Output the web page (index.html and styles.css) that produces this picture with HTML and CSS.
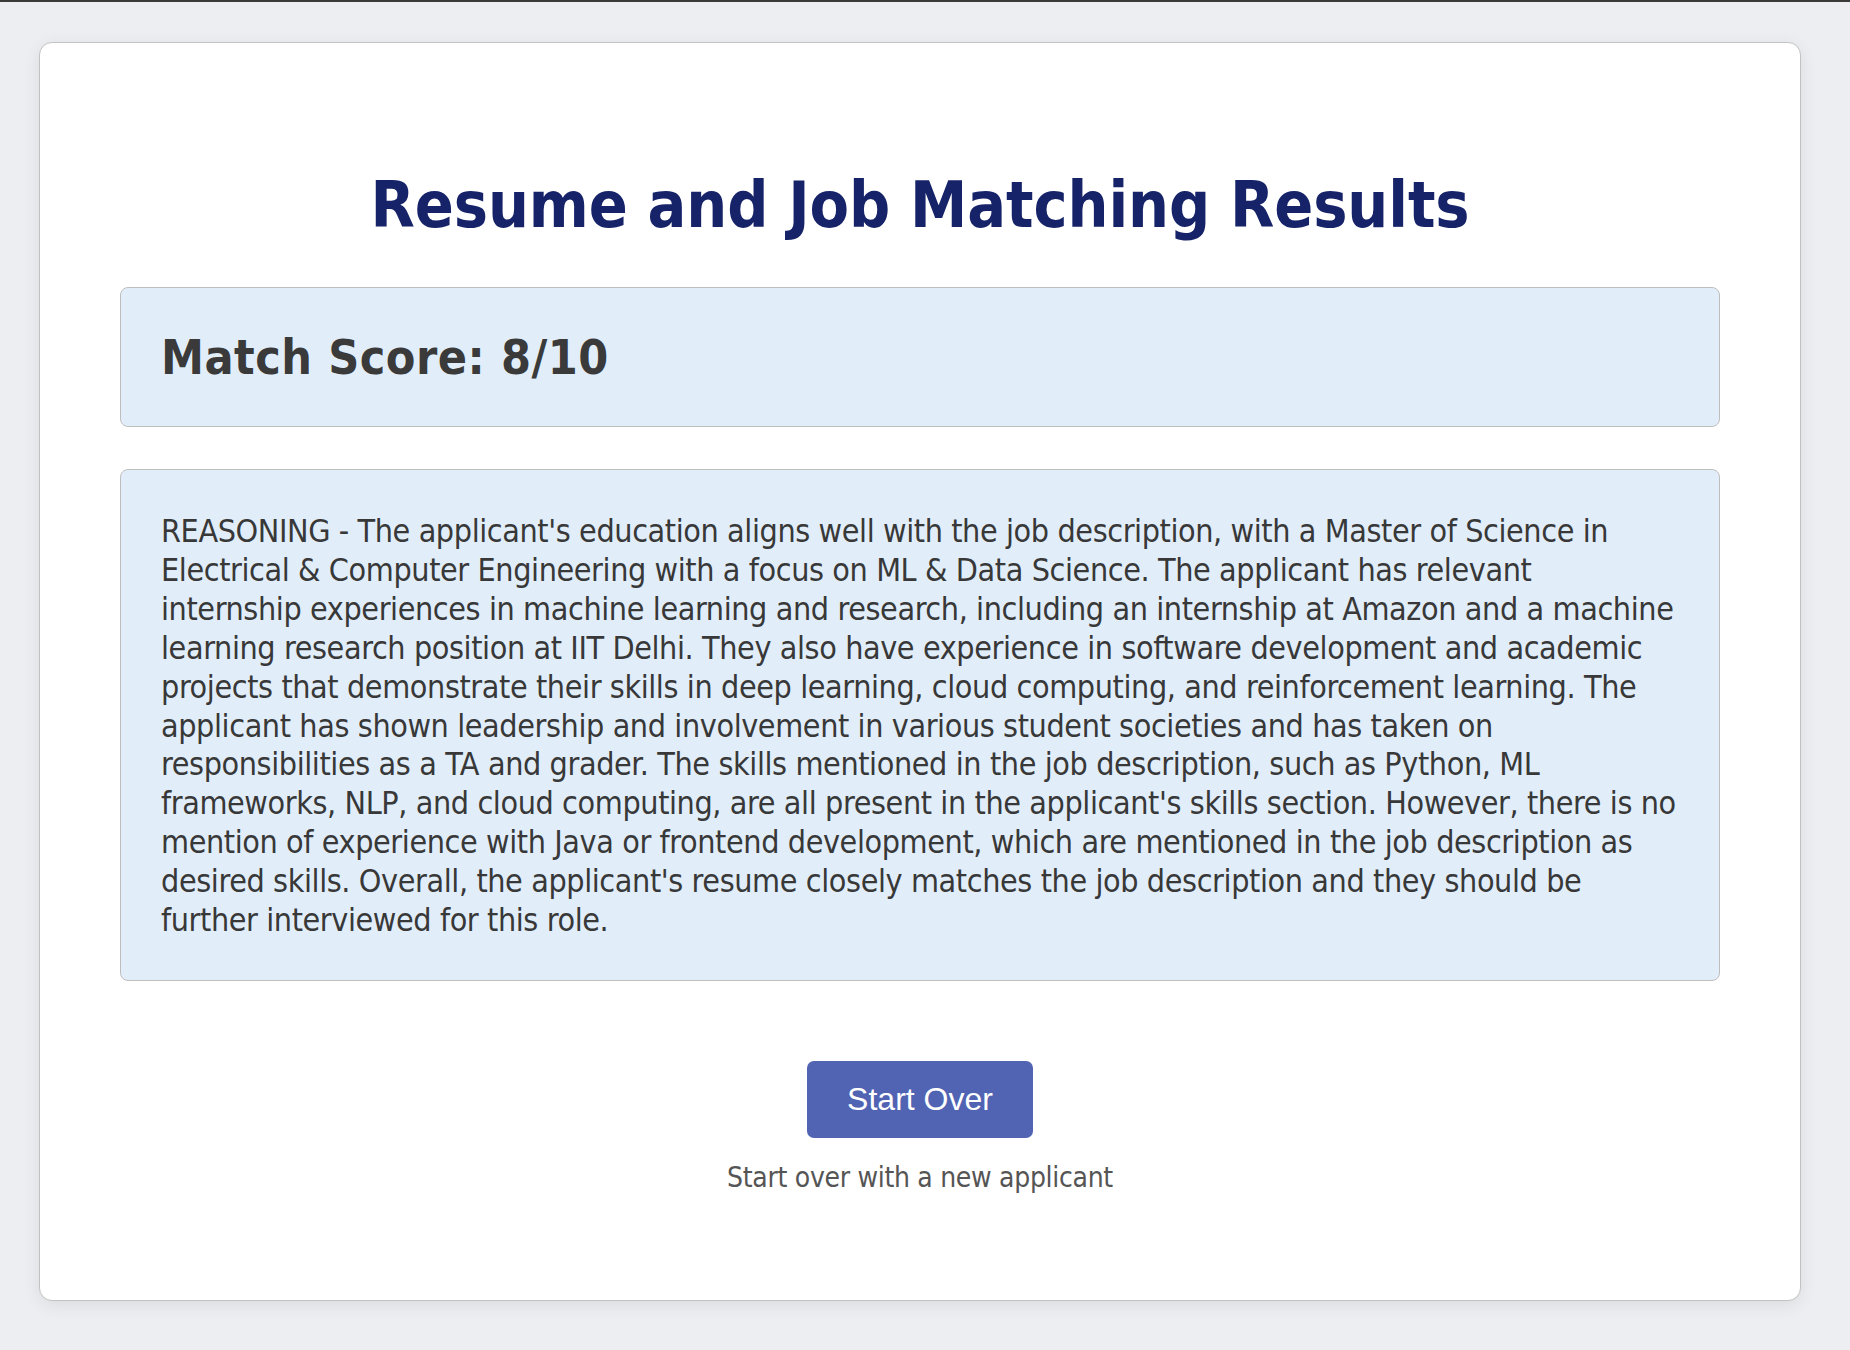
FILE: index.html
```html
<!DOCTYPE html>
<html lang="en">
<head>
<meta charset="utf-8">
<title>Resume and Job Matching Results</title>
<link rel="stylesheet" href="styles.css">
</head>
<body>
<div class="topbar"></div>
<main class="card">
  <h1 class="title">Resume and Job Matching Results</h1>
  <section class="panel score">
    <h2 class="score-text">Match Score: 8/10</h2>
  </section>
  <section class="panel reasoning">
    <p class="reasoning-text">REASONING - The applicant's education aligns well with the job description, with a Master of Science in<br>
Electrical &amp; Computer Engineering with a focus on ML &amp; Data Science. The applicant has relevant<br>
internship experiences in machine learning and research, including an internship at Amazon and a machine<br>
learning research position at IIT Delhi. They also have experience in software development and academic<br>
projects that demonstrate their skills in deep learning, cloud computing, and reinforcement learning. The<br>
applicant has shown leadership and involvement in various student societies and has taken on<br>
responsibilities as a TA and grader. The skills mentioned in the job description, such as Python, ML<br>
frameworks, NLP, and cloud computing, are all present in the applicant's skills section. However, there is no<br>
mention of experience with Java or frontend development, which are mentioned in the job description as<br>
desired skills. Overall, the applicant's resume closely matches the job description and they should be<br>
further interviewed for this role.</p>
  </section>
  <div class="actions">
    <button class="btn" type="button">Start Over</button>
    <p class="hint">Start over with a new applicant</p>
  </div>
</main>
</body>
</html>
```

FILE: styles.css
```css
html, body {
  margin: 0;
  padding: 0;
}
body {
  background: #edeef2;
  font-family: "DejaVu Sans Condensed", "DejaVu Sans", sans-serif;
  font-stretch: condensed;
  color: #333;
  min-height: 1350px;
}
.topbar {
  height: 2px;
  background: #3a3a3a;
}
.card {
  box-sizing: border-box;
  width: 1762px;
  margin: 40px 0 0 39px;
  padding: 80px;
  background: #fff;
  border: 1px solid #c2c2c2;
  border-radius: 13px;
  box-shadow: 0 4px 18px rgba(0, 0, 0, 0.08);
}
.title {
  margin: 44px 0 43px;
  text-align: center;
  font-size: 64px;
  line-height: 77px;
  font-weight: bold;
  color: #172369;
  letter-spacing: -0.1px;
}
.panel {
  background: #e1eefa;
  border: 1px solid #bebebe;
  border-radius: 8px;
  padding: 40px;
}
.score {
  margin-bottom: 42px;
}
.score-text {
  margin: 0;
  font-size: 48px;
  line-height: 58px;
  font-weight: bold;
  color: #3a3a3a;
  letter-spacing: 0.5px;
}
.reasoning-text {
  margin: 0;
  padding-top: 2px;
  font-size: 32px;
  line-height: 38.9px;
  color: #383838;
  letter-spacing: -0.4px;
  white-space: nowrap;
}
.actions {
  display: flex;
  flex-direction: column;
  align-items: center;
  margin-top: 80px;
}
.btn {
  font-family: "Liberation Sans", Arial, sans-serif;
  font-stretch: normal;
  font-size: 32px;
  line-height: 37px;
  padding: 20px 40px;
  color: #fff;
  background: #5163b3;
  border: none;
  border-radius: 7px;
}
.hint {
  margin: 23px 0 25px;
  font-size: 28px;
  line-height: 34px;
  color: #555;
  letter-spacing: -0.3px;
}
```
